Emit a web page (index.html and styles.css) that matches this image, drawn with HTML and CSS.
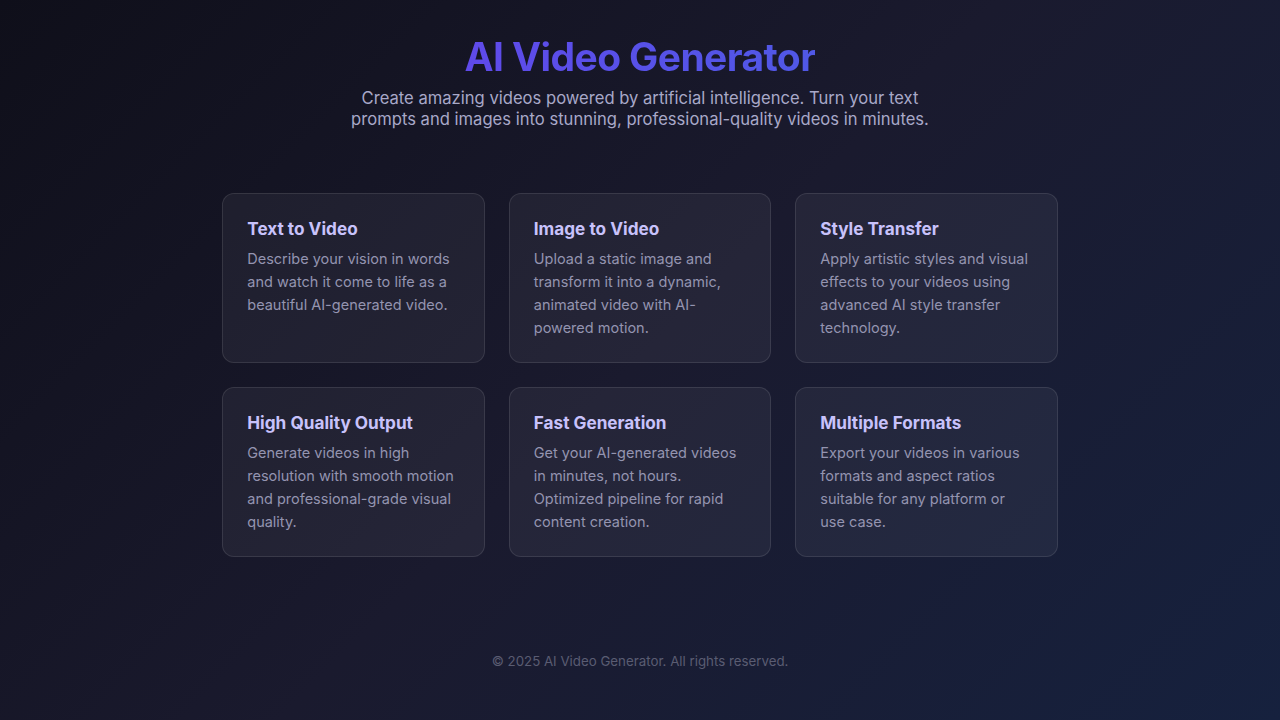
FILE: index.html
```html
<!DOCTYPE html>
<html lang="en">
<head>
<meta charset="utf-8">
<title>AI Video Generator</title>
<link rel="stylesheet" href="styles.css">
</head>
<body>
<div class="page">
  <header class="hero">
    <h1 class="title">AI Video Generator</h1>
    <p class="subtitle">Create amazing videos powered by artificial intelligence. Turn your text prompts and images into stunning, professional-quality videos in minutes.</p>
  </header>
  <main class="grid">
    <div class="card">
      <h3 class="card-title">Text to Video</h3>
      <p class="card-text">Describe your vision in words and watch it come to life as a beautiful AI-generated video.</p>
    </div>
    <div class="card">
      <h3 class="card-title">Image to Video</h3>
      <p class="card-text">Upload a static image and transform it into a dynamic, animated video with AI-powered motion.</p>
    </div>
    <div class="card">
      <h3 class="card-title">Style Transfer</h3>
      <p class="card-text">Apply artistic styles and visual effects to your videos using advanced AI style transfer technology.</p>
    </div>
    <div class="card">
      <h3 class="card-title">High Quality Output</h3>
      <p class="card-text">Generate videos in high resolution with smooth motion and professional-grade visual quality.</p>
    </div>
    <div class="card">
      <h3 class="card-title">Fast Generation</h3>
      <p class="card-text">Get your AI-generated videos in minutes, not hours. Optimized pipeline for rapid content creation.</p>
    </div>
    <div class="card">
      <h3 class="card-title">Multiple Formats</h3>
      <p class="card-text">Export your videos in various formats and aspect ratios suitable for any platform or use case.</p>
    </div>
  </main>
  <footer class="footer">© 2025 AI Video Generator. All rights reserved.</footer>
</div>
</body>
</html>
```
FILE: styles.css
```css
* { box-sizing: border-box; }
html, body { margin: 0; padding: 0; }
body {
  min-height: 100vh;
  font-family: Inter, "Noto Sans", sans-serif;
  background: linear-gradient(135deg, #0f0f1a 0%, #1a1a2e 50%, #16213e 100%);
  color: #e0e0f0;
}
.page {
  display: flex;
  flex-direction: column;
  align-items: center;
  padding-top: 33px;
}
.hero {
  text-align: center;
  display: flex;
  flex-direction: column;
  align-items: center;
}
.title {
  margin: 0;
  font-size: 39px;
  line-height: 48px;
  font-weight: 700;
  letter-spacing: -0.6px;
  background: linear-gradient(90deg, #5f4aea 0%, #5058e6 100%);
  -webkit-background-clip: text;
  background-clip: text;
  color: transparent;
}
.subtitle {
  margin: 7px 0 0;
  width: 600px;
  font-size: 16.6px;
  line-height: 21px;
  color: #a8a8c8;
}
.grid {
  margin-top: 63px;
  display: grid;
  grid-template-columns: repeat(3, 262.5px);
  gap: 24px 24px;
}
.card {
  height: 170px;
  padding: 24px 24px;
  background: rgba(255, 255, 255, 0.05);
  border: 1px solid rgba(255, 255, 255, 0.1);
  border-radius: 12px;
}
.card-title {
  margin: 0 0 7px;
  font-size: 17.2px;
  line-height: 22px;
  font-weight: 700;
  color: #c8c2fb;
}
.card-text {
  margin: 0;
  font-size: 14.5px;
  line-height: 23px;
  color: #9494b0;
}
.footer {
  margin-top: 94px;
  font-size: 13.3px;
  line-height: 20px;
  color: #5a5c72;
}
```
